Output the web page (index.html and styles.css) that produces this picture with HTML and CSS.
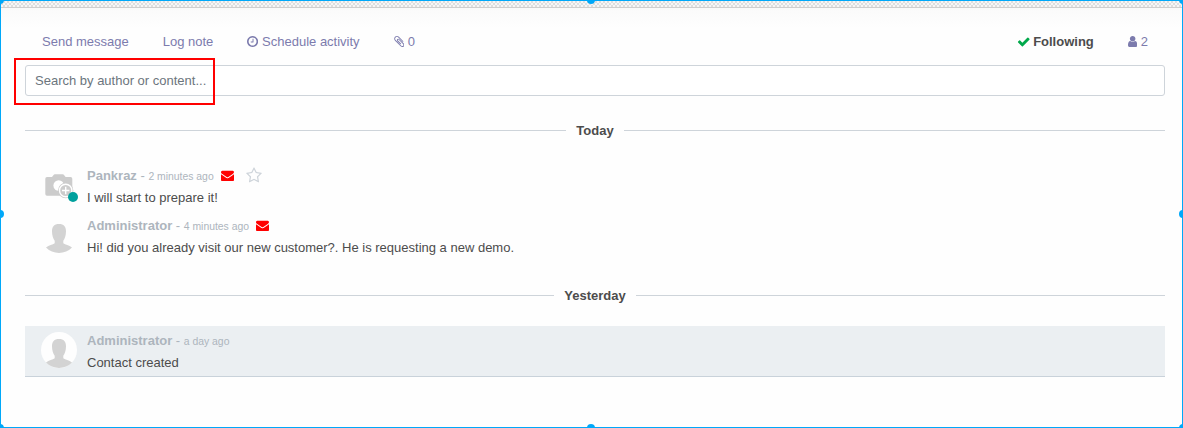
FILE: index.html
```html
<!DOCTYPE html>
<html lang="en">
<head>
<meta charset="utf-8">
<title>Chatter</title>
<link rel="stylesheet" href="styles.css">
</head>
<body>
<svg class="defs" width="0" height="0">
  <symbol id="envelope" viewBox="0 0 1792 1792"><path d="M1792 710v794q0 66-47 113t-113 47h-1472q-66 0-113-47t-47-113v-794q44 49 101 87 362 246 497 345 57 42 92.500 65.500t94.500 48 110 24.500h2q51 0 110-24.500t94.500-48 92.500-65.500q170-123 498-345 57-39 100-87zm0-294q0 79-49 151t-122 123q-376 261-468 325-10 7-42.500 30.500t-54 38-52 32.500-57.500 27-50 9h-2q-23 0-50-9t-57.500-27-52-32.500-54-38-42.500-30.500q-91-64-262-182.500t-205-142.500q-62-42-117-115.500t-55-136.500q0-78 41.500-130t118.500-52h1472q65 0 112.500 47t47.500 113z"/></symbol>
  <symbol id="person" viewBox="0 0 36 36"><circle cx="18" cy="18" r="18" fill="#fefefe"/><path fill="#d3d3d3" d="M18 7c4.800 0 7 2.600 7 7.300 0 4.300-1.200 7.300-2.700 9.400v2.500c2 1.500 5.700 1.700 8.700 4.200A18 18 0 0 1 5 30.400c3-2.500 6.700-2.700 8.700-4.200v-2.500c-1.500-2.100-2.700-5.100-2.700-9.400C11 9.600 13.200 7 18 7z"/></symbol>
</svg>
<main class="frame">
  <div class="checker"></div>
  <section class="chatter">
    <nav class="topbar">
      <a class="send">Send message</a>
      <a class="log">Log note</a>
      <a class="schedule"><svg class="icon clock" viewBox="0 0 1536 1792"><path d="M896 544v448q0 14-9 23t-23 9h-320q-14 0-23-9t-9-23v-64q0-14 9-23t23-9h224v-352q0-14 9-23t23-9h64q14 0 23 9t9 23zm416 352q0-148-73-273t-198-198-273-73-273 73-198 198-73 273 73 273 198 198 273 73 273-73 198-198 73-273zm224 0q0 209-103 385.500t-279.500 279.500-385.500 103-385.500-103-279.500-279.500-103-385.500 103-385.500 279.500-279.500 385.500-103 385.500 103 279.500 279.500 103 385.500z"/></svg>Schedule activity</a>
      <a class="files"><svg class="icon clip" viewBox="190 0 1406 1792"><path d="M1596 1385q0 117-79 196t-196 79q-135 0-235-100l-777-776q-113-115-113-271 0-159 110-270t269-111q158 0 273 113l605 606q10 10 10 22 0 16-30.500 46.500t-46.500 30.500q-13 0-23-10l-606-607q-79-77-181-77-106 0-179 75t-73 181q0 105 76 181l776 777q63 63 145 63 64 0 106-42t42-106q0-82-63-145l-581-581q-26-24-60-24-29 0-48 19t-19 48q0 32 25 59l410 410q10 10 10 22 0 16-31 47t-47 31q-12 0-22-10l-410-410q-63-61-63-149 0-82 57-139t139-57q88 0 149 63l581 581q100 98 100 235z"/></svg>0</a>
      <a class="following"><svg class="icon check" viewBox="0 0 1792 1792"><path d="M1671 566q0 40-28 68l-724 724-136 136q-28 28-68 28t-68-28l-136-136-362-362q-28-28-28-68t28-68l136-136q28-28 68-28t68 28l294 295 656-657q28-28 68-28t68 28l136 136q28 28 28 68z"/></svg>Following</a>
      <a class="followers"><svg class="icon user" viewBox="0 0 1280 1792"><path d="M1280 1399q0 109-62.500 187t-150.500 78h-854q-88 0-150.500-78t-62.500-187q0-85 8.500-160.500t31.500-152 58.500-131 94-89 134.500-34.500q131 128 313 128t313-128q76 0 134.500 34.500t94 89 58.500 131 31.500 152 8.500 160.500zm-256-887q0 159-112.500 271.500t-271.500 112.500-271.500-112.500-112.500-271.500 112.500-271.500 271.500-112.500 271.500 112.500 112.500 271.500z"/></svg>2</a>
    </nav>
    <div class="search">Search by author or content...<span class="highlight"></span></div>
    <h2 class="day">Today</h2>
    <article class="message">
      <div class="avatar">
        <svg class="photo" viewBox="0 0 36 36"><path fill="#ccc" d="M6 10h5l1.600-2.100q.4-.6 1.200-.6h8q.8 0 1.200.6l1.600 2.100h5q1.700 0 1.700 1.700v15.300q0 1.700-1.700 1.700H6q-1.700 0-1.700-1.700V11.700Q4.300 10 6 10z"/><circle cx="17.700" cy="18.500" r="5.300" fill="#fff"/><circle cx="24.700" cy="23.500" r="7.700" fill="#ccc"/><circle cx="24.700" cy="23.500" r="6.200" fill="#ccc" stroke="#fff" stroke-width="1.400"/><path d="M24.700 19.800v7.400M21 23.500h7.400" stroke="#fff" stroke-width="1.400"/></svg>
        <span class="online"></span>
      </div>
      <div class="body">
        <header><b>Pankraz</b><span class="dash">-</span><time>2 minutes ago</time><svg class="icon mail"><use href="#envelope"/></svg><svg class="star" viewBox="0 0 1664 1792"><path d="M1137 1004l306-297-422-62-189-382-189 382-422 62 306 297-73 421 378-199 377 199zm527-357q0 22-26 48l-363 354 86 500q1 7 1 20 0 50-41 50-19 0-40-12l-449-236-449 236q-22 12-40 12-21 0-31.500-14.500t-10.500-35.500q0-6 2-20l86-500-364-354q-25-27-25-48 0-37 56-46l502-73 225-455q19-41 49-41t49 41l225 455 502 73q56 9 56 46z"/></svg></header>
        <p>I will start to prepare it!</p>
      </div>
    </article>
    <article class="message">
      <div class="avatar"><svg class="photo"><use href="#person"/></svg></div>
      <div class="body">
        <header><b>Administrator</b><span class="dash">-</span><time>4 minutes ago</time><svg class="icon mail"><use href="#envelope"/></svg></header>
        <p>Hi! did you already visit our new customer?. He is requesting a new demo.</p>
      </div>
    </article>
    <h2 class="day yesterday">Yesterday</h2>
    <article class="message note">
      <div class="avatar"><svg class="photo"><use href="#person"/></svg></div>
      <div class="body">
        <header><b>Administrator</b><span class="dash">-</span><time>a day ago</time></header>
        <p>Contact created</p>
      </div>
    </article>
  </section>
  <i class="handle tl"></i><i class="handle tc"></i><i class="handle tr"></i>
  <i class="handle ml"></i><i class="handle mr"></i>
  <i class="handle bl"></i><i class="handle bc"></i><i class="handle br"></i>
</main>
</body>
</html>
```
FILE: styles.css
```css
* { box-sizing: border-box; }
body {
  margin: 0;
  background: #fff;
  color: #4c4c4c;
  font: 13px/20px "Liberation Sans", Arial, sans-serif;
}
.defs { position: absolute; }
.frame {
  position: relative;
  height: 428px;
  overflow: hidden;
  border: 1px solid #00a8f9;
}
.checker {
  height: 7px;
  border-bottom: 1px solid #cfcfcf;
  background: repeating-conic-gradient(#dedede 0 25%, #f6f6f6 0 50%) 0 0 / 4px 4px;
}
.chatter {
  height: 419px;
  padding: 24px 17px 0 24px;
  background: linear-gradient(#fafafa, #fefefe 20px, #fefefe);
}
.topbar {
  display: flex;
  height: 20px;
  padding: 0 17px;
  color: #7c7bad;
}
.topbar a { display: flex; align-items: center; }
.log { margin-left: 34px; }
.schedule { margin-left: 34px; }
.files { margin-left: 34px; }
.following { margin-left: auto; color: #4c4c4c; font-weight: bold; }
.followers { margin-left: 34px; }
.icon { flex: none; height: 13px; fill: currentColor; }
.topbar .icon { margin-bottom: 1px; }
.clock { width: 11.140px; margin-right: 3.600px; }
.clip { width: 10.500px; margin-right: 3.500px; }
.check { width: 13.500px; height: 13.500px; margin-right: 2.500px; fill: #00a84a; }
.user { width: 9.300px; margin-right: 3.700px; }
.search {
  position: relative;
  height: 31px;
  margin-top: 13px;
  padding: 5px 9px;
  border: 1px solid #ced4da;
  border-radius: 3px;
  background: #fff;
  color: #6c757d;
  line-height: 19px;
}
.highlight {
  position: absolute;
  left: -12px;
  top: -8px;
  width: 201px;
  height: 47px;
  border: 2px solid #f00;
}
.day {
  display: flex;
  align-items: center;
  gap: 10px;
  height: 20px;
  margin: 25px 0 20px;
  font-size: 13px;
}
.day::before, .day::after { content: ""; flex: 1; height: 1px; margin-bottom: 1px; background: #ced4da; }
.message {
  display: flex;
  height: 50px;
  padding: 0 16px;
}
.avatar { position: relative; width: 36px; height: 36px; margin: 6px 10px 0 0; }
.photo { display: block; width: 36px; height: 36px; }
.online {
  position: absolute;
  left: 26.500px;
  top: 25px;
  width: 10px;
  height: 10px;
  border-radius: 50%;
  background: #00a09d;
}
.body { padding-top: 5px; }
.body header { display: flex; align-items: center; height: 20px; color: #adb5bd; }
.body p { margin: 2px 0 0; }
.dash { margin: 0 3.600px; }
time { font-size: 10.400px; line-height: 20px; padding-top: 1px; }
.mail { width: 13px; margin: 0 0 1px 7px; color: #f00; }
.star { width: 16px; height: 17px; margin: 0 0 1px 12px; fill: #ced4da; }
.yesterday { margin: 25px 0 20px; }
.note { height: 51px; background: #ebeff2; border-bottom: 1px solid #c9d2da; }
.handle {
  position: absolute;
  width: 8px;
  height: 8px;
  border-radius: 50%;
  background: #00a8f9;
}
.tl, .tc, .tr { top: -5px; }
.ml, .mr { top: 209px; }
.bl, .bc, .br { bottom: -5px; }
.tl, .ml, .bl { left: -5px; }
.tc, .bc { left: 586px; }
.tr, .mr, .br { right: -5px; }
```
